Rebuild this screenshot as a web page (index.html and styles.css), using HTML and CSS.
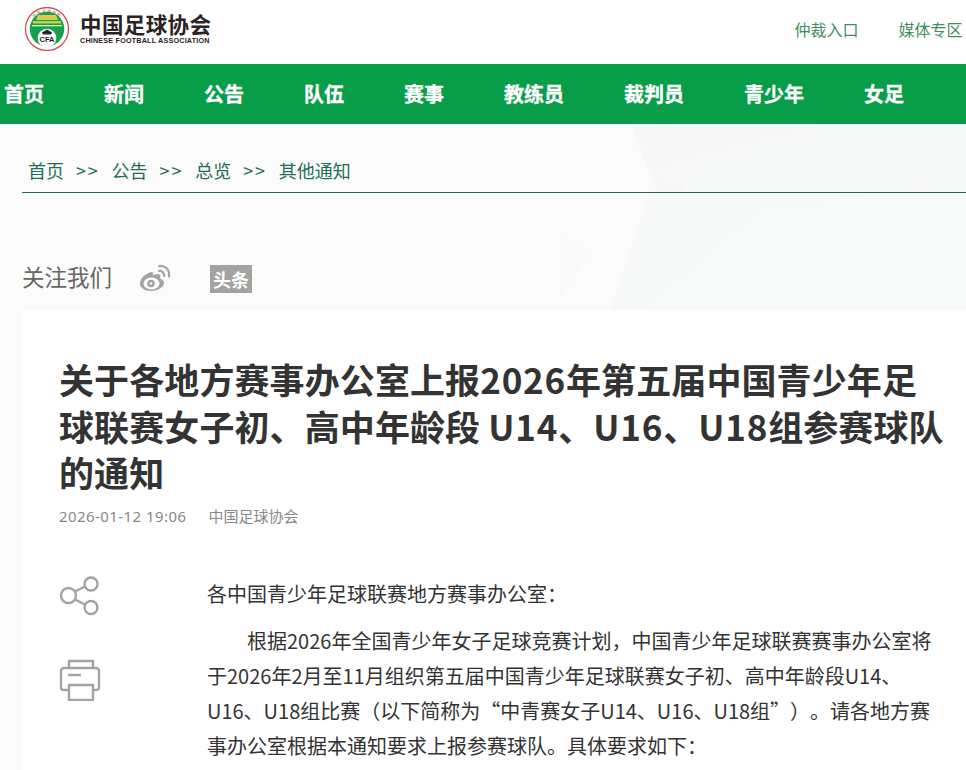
FILE: index.html
```html
<!DOCTYPE html>
<html lang="zh-CN">
<head>
<meta charset="utf-8">
<title>关于各地方赛事办公室上报参赛球队的通知</title>
<link rel="stylesheet" href="styles.css">
</head>
<body>
<header class="top">
  <div class="brand">
    <svg class="emblem" viewBox="0 0 46 44" width="46" height="44">
      <defs>
        <path id="ring" d="M4.500 24a18.500 18.500 0 0 1 37 0"/>
      </defs>
      <circle cx="23" cy="22" r="21.500" fill="#fff" stroke="#cf4f57" stroke-width="1.300"/>
      <text class="ringtext"><textPath href="#ring" startOffset="50%">中国足球协会</textPath></text>
      <circle cx="23" cy="22" r="17.300" fill="#17a14a"/>
      <path d="M14 8h18l2 5H12z" fill="#d5cf4f"/>
      <path d="M9 14h28v2.500H9z" fill="#c9cf4a"/>
      <path d="M8 18h30v1.300H8z" fill="#eef3c4"/>
      <circle cx="23" cy="31" r="9.300" fill="#fff"/>
      <path d="M18 25.500l5-3 5 3-1 2h-8z" fill="#222"/>
      <text x="23" y="34.500" class="cfa">CFA</text>
    </svg>
    <div class="wordmark">
      <div class="wm-cn">中国足球协会</div>
      <div class="wm-en">CHINESE FOOTBALL ASSOCIATION</div>
    </div>
  </div>
  <div class="toplinks">
    <a>仲裁入口</a>
    <a>媒体专区</a>
  </div>
</header>
<nav class="nav">
  <a>首页</a><a>新闻</a><a>公告</a><a>队伍</a><a>赛事</a><a>教练员</a><a>裁判员</a><a>青少年</a><a>女足</a>
</nav>
<main class="page">
  <svg class="bgshapes" viewBox="0 124 966 186" width="966" height="186">
    <path d="M630 124h200l-117 46-30 22-26-0z" fill="#f7f7f7"/>
    <path d="M830 124h136v64l-206 19-120 103h-30l40-118h40l-30-22z" fill="#f7f8f8"/>
    <path d="M760 207l206-19v122H640z" fill="#f8f9f9"/>
    <path d="M560 232l30 22-28 42h-2z" fill="#f9f9f9"/>
  </svg>
  <div class="crumbs">
    <a>首页</a><span class="sep">&gt;&gt;</span><a>公告</a><span class="sep">&gt;&gt;</span><a>总览</a><span class="sep">&gt;&gt;</span><a>其他通知</a>
  </div>
  <div class="follow">
    <span class="follow-label">关注我们</span>
    <svg class="weibo" viewBox="0 0 32 28" width="32" height="28">
      <path d="M13 8C7 9 1 14 1 19.500c0 4.500 5 7.500 11 7.500 7 0 13-4 13-8 0-3-3-4-4-4.500 1-3 0-4.500-2-4.500-2 0-4 1-5 1.500 .3-2 .2-3.500-1-3.500z" fill="#a3a3a3"/>
      <ellipse cx="12.500" cy="19.500" rx="8" ry="6" fill="#fff"/>
      <circle cx="12" cy="19.500" r="3.800" fill="#a3a3a3"/>
      <circle cx="12" cy="19.500" r="1.300" fill="#fff"/>
      <path d="M20 2c5.500-1 11 3 10 10.500M20 7c3-.5 5.500 2 5 5" fill="none" stroke="#a3a3a3" stroke-width="2.200" stroke-linecap="round"/>
    </svg>
    <span class="toutiao">头条</span>
  </div>
  <article class="card">
    <h1 class="title">关于各地方赛事办公室上报<span class="lat">2026</span>年第五届中国青少年足球联赛女子初、高中年龄段 <span class="lat">U14</span>、<span class="lat">U16</span>、<span class="lat">U18</span>组参赛球队的通知</h1>
    <div class="meta"><span class="date">2026-01-12 19:06</span><span>中国足球协会</span></div>
    <div class="body">
      <aside class="tools">
        <svg viewBox="0 0 42 40" width="42" height="40" fill="none" stroke="#a3a3a3" stroke-width="2.400">
          <circle cx="9.500" cy="19.500" r="7.500"/>
          <circle cx="32" cy="8" r="6.500"/>
          <circle cx="32" cy="31.500" r="6.500"/>
          <path d="M16 15.500l10-5M16 23.500l10 5"/>
        </svg>
        <svg viewBox="0 0 42 42" width="42" height="42" fill="none" stroke="#a3a3a3" stroke-width="2.400">
          <path d="M10 9V2h24v7"/>
          <path d="M10 31H4a2.500 2.500 0 0 1-2-2.500V12a3 3 0 0 1 3-3h32a3 3 0 0 1 3 3v16.500a2.500 2.500 0 0 1-2.500 2.500H34"/>
          <path d="M10 26h24v15H10z"/>
          <path d="M9 16h13"/>
        </svg>
      </aside>
      <div class="content">
        <p class="salute">各中国青少年足球联赛地方赛事办公室：</p>
        <p class="para">根据2026年全国青少年女子足球竞赛计划，中国青少年足球联赛赛事办公室将于2026年2月至11月组织第五届中国青少年足球联赛女子初、高中年龄段U14、U16、U18组比赛（以下简称为“中青赛女子U14、U16、U18组”）。请各地方赛事办公室根据本通知要求上报参赛球队。具体要求如下：</p>
      </div>
    </div>
  </article>
</main>
</body>
</html>
```

FILE: styles.css
```css
* { box-sizing: border-box; }
html, body { margin: 0; padding: 0; }
body {
  width: 966px;
  height: 770px;
  overflow: hidden;
  background: #fbfbfb;
  font-family: "Noto Sans CJK SC", "Noto Sans", sans-serif;
  color: #333;
  text-spacing-trim: space-all;
}
.top {
  height: 64px;
  background: #fff;
  display: flex;
  justify-content: space-between;
  align-items: center;
  padding: 0 0 6px 24px;
  white-space: nowrap;
}
.brand { display: flex; align-items: center; gap: 10px; }
.emblem { flex: none; }
.ringtext { font-size: 3.800px; fill: #b8454c; text-anchor: middle; letter-spacing: 1px; }
.cfa { font: bold 7.500px "Liberation Sans", sans-serif; text-anchor: middle; fill: #1a1a1a; }
.wordmark { display: flex; flex-direction: column; }
.wm-cn { font-size: 21.500px; font-weight: 700; line-height: 24px; letter-spacing: 0.400px; color: #2b2224; }
.wm-en { font: bold 7.200px/10px "Liberation Sans", sans-serif; letter-spacing: 0.200px; color: #2b2224; }
.toplinks { display: flex; gap: 40px; font-size: 16px; color: #3f8f63; width: 171.500px; flex: none; overflow: hidden; }
.nav {
  height: 60px;
  background: #079d49;
  display: flex;
  align-items: center;
  gap: 60px;
  padding: 0 0 2px 4px;
  overflow: hidden;
  white-space: nowrap;
  font-size: 20px;
  font-weight: 700;
  color: #fff;
  -webkit-text-stroke: 0.3px #fff;
}
.page { position: relative; height: 646px; overflow: hidden; }
.bgshapes { position: absolute; left: 0; top: 0; }
.crumbs {
  position: relative;
  height: 69px;
  margin-left: 22px;
  padding: 30px 0 0 6px;
  border-bottom: 1px solid #1f6e4e;
  display: flex;
  gap: 12px;
  font-size: 18px;
  line-height: 32px;
  color: #1f6e55;
}
.sep { letter-spacing: 1.800px; }
.follow {
  position: relative;
  height: 117px;
  margin-left: 22px;
  display: flex;
  align-items: center;
  font-size: 22.500px;
  color: #666;
  padding-top: 48px;
}
.follow-label { margin-right: 27px; }
.weibo { margin: 4px 39px 0 0; }
.toutiao {
  width: 42px;
  height: 28px;
  margin-top: 6px;
  background: #a3a3a3;
  color: #fff;
  font-size: 18px;
  font-weight: 700;
  line-height: 28px;
  text-align: center;
}
.card {
  position: relative;
  margin-left: 22px;
  background: #fff;
  padding: 46px 0 0 37px;
  height: 460px;
}
.title {
  margin: 0;
  width: 888px;
  font-size: 35px;
  font-weight: 700;
  line-height: 46.500px;
  letter-spacing: 0.100px;
  color: #333;
}
.lat { letter-spacing: 0.800px; }
.meta { display: flex; gap: 22px; margin-top: 8px; font-size: 15px; line-height: 24px; color: #888; }
.date { font-family: "Noto Sans", sans-serif; letter-spacing: 0.430px; }
.body { display: flex; margin-top: 48px; }
.tools { width: 148px; flex: none; display: flex; flex-direction: column; gap: 43px; }
.content { width: 735px; font-size: 20px; line-height: 35px; color: #333; }
.content p { margin: 0; }
.salute { margin-bottom: 12px !important; }
.para { text-indent: 2em; }
```
